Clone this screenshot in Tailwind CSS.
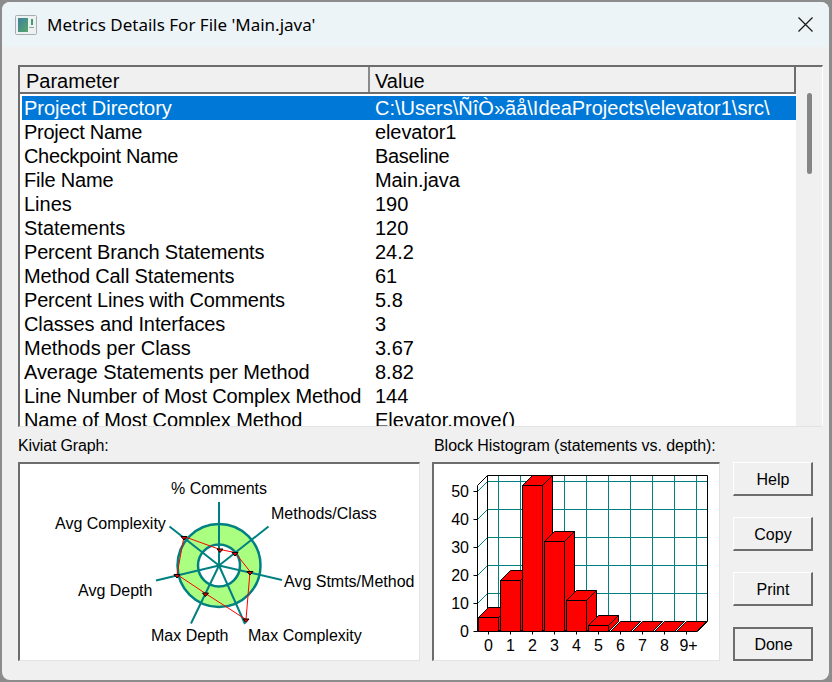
<!DOCTYPE html>
<html lang="en">
<head>
  <meta charset="UTF-8" />
  <title>Metrics Details</title>
  <script src="https://cdn.jsdelivr.net/npm/@tailwindcss/browser@4"></script>
</head>
<body class="h-[682px] w-[832px] overflow-hidden bg-[#8c8c8c] p-[2px] pr-[3px] font-['Liberation_Sans',sans-serif] text-black">

  <div class="flex h-[678px] flex-col overflow-hidden rounded-lg bg-[#f0f0f0]">
    <!-- title bar -->
    <header class="flex h-[45px] shrink-0 items-center bg-[#edf4f8] pl-[13px] pr-[16px]">
      <svg class="h-[20px] w-[22px]" viewBox="0 0 22 20">
        <defs>
          <linearGradient id="ico" x1="0" y1="0" x2="1" y2="1">
            <stop offset="0" stop-color="#3f7f9f" />
            <stop offset="1" stop-color="#55a86a" />
          </linearGradient>
        </defs>
        <rect x="0.5" y="0.5" width="21" height="19" rx="1" fill="#eef1f1" stroke="#a5aeb0" />
        <rect x="3" y="3" width="10" height="14" fill="url(#ico)" />
        <rect x="14" y="12" width="5" height="1" fill="#8fa89a" />
        <rect x="16" y="4" width="2" height="6" fill="#3f9f6a" />
      </svg>
      <span class="ml-[10px] font-['Noto_Sans',sans-serif] text-[17px] leading-none">Metrics Details For File 'Main.java'</span>
      <svg class="ml-auto h-[15px] w-[15px]" viewBox="0 0 15 15" fill="none" stroke="#1a1a1a" stroke-width="1.3">
        <path d="M0.5 0.5 14.5 14.5M14.5 0.5 0.5 14.500" />
      </svg>
    </header>

    <!-- parameter list -->
    <section class="mx-[16px] mt-[18px] flex h-[362px] w-[805px] shrink-0 border-t-2 border-l-2 border-t-[#6d6d6d] border-l-[#6d6d6d] border-r-1 border-b-1 border-r-white border-b-[#e3e3e3] bg-white">
      <div class="h-full w-[776px] overflow-hidden">
        <div class="flex h-[27px] border-b-2 border-b-[#6d6d6d] bg-[#f0f0f0] text-[20px] leading-[28px]">
          <div class="w-[350px] border-r-2 border-r-[#8a8a8a] pl-[6px]">Parameter</div>
          <div class="flex-1 border-r-2 border-r-[#6d6d6d] pl-[5px]">Value</div>
        </div>
        <ul class="pt-[2px] pl-[2px] text-[20px] leading-[24px]">
          <li class="flex h-[24px] bg-[#0078d7] text-white"><span class="w-[353px] pl-[2px]">Project Directory</span><span>C:\Users\ÑîÒ»ãå\IdeaProjects\elevator1\src\</span></li>
          <li class="flex h-[24px]"><span class="w-[353px] pl-[2px] tracking-[-0.25px]">Project Name</span><span class="tracking-[-0.1px]">elevator1</span></li>
          <li class="flex h-[24px]"><span class="w-[353px] pl-[2px] tracking-[-0.33px]">Checkpoint Name</span><span class="tracking-[-0.3px]">Baseline</span></li>
          <li class="flex h-[24px]"><span class="w-[353px] pl-[2px] tracking-[-0.2px]">File Name</span><span class="tracking-[-0.1px]">Main.java</span></li>
          <li class="flex h-[24px]"><span class="w-[353px] pl-[2px]">Lines</span><span>190</span></li>
          <li class="flex h-[24px]"><span class="w-[353px] pl-[2px]">Statements</span><span>120</span></li>
          <li class="flex h-[24px]"><span class="w-[353px] pl-[2px] tracking-[-0.17px]">Percent Branch Statements</span><span>24.2</span></li>
          <li class="flex h-[24px]"><span class="w-[353px] pl-[2px] tracking-[-0.14px]">Method Call Statements</span><span>61</span></li>
          <li class="flex h-[24px]"><span class="w-[353px] pl-[2px] tracking-[-0.18px]">Percent Lines with Comments</span><span>5.8</span></li>
          <li class="flex h-[24px]"><span class="w-[353px] pl-[2px] tracking-[-0.1px]">Classes and Interfaces</span><span>3</span></li>
          <li class="flex h-[24px]"><span class="w-[353px] pl-[2px]">Methods per Class</span><span>3.67</span></li>
          <li class="flex h-[24px]"><span class="w-[353px] pl-[2px] tracking-[-0.07px]">Average Statements per Method</span><span>8.82</span></li>
          <li class="flex h-[24px]"><span class="w-[353px] pl-[2px] tracking-[-0.15px]">Line Number of Most Complex Method</span><span>144</span></li>
          <li class="flex h-[24px]"><span class="w-[353px] pl-[2px] tracking-[-0.11px]">Name of Most Complex Method</span><span>Elevator.move()</span></li>
        </ul>
      </div>
      <!-- scrollbar -->
      <div class="flex-1 bg-[#f0f0f0] pt-[26px] pl-[11px]">
        <div class="h-[81px] w-[5px] rounded-full bg-[#858585]"></div>
      </div>
    </section>

    <!-- graphs + buttons -->
    <div class="mx-[16px] mt-[8px] flex">
      <div class="w-[402px]">
        <div class="h-[27px] text-[16px] leading-[21px] tracking-[-0.15px]">Kiviat Graph:</div>
        <div class="h-[199px] border-t-2 border-l-2 border-t-[#6d6d6d] border-l-[#6d6d6d] border-r-1 border-b-1 border-r-[#e3e3e3] border-b-[#e3e3e3] bg-white">
          <svg class="block h-[196px] w-[399px]" viewBox="20 464 399 196">
            <circle cx="219" cy="565.5" r="31.5" fill="none" stroke="#aaff80" stroke-width="20" />
            <circle cx="219" cy="565.5" r="41.5" fill="none" stroke="#008080" stroke-width="2.500" />
            <circle cx="219" cy="565.5" r="21" fill="none" stroke="#008080" stroke-width="2.500" />
            <path d="M219 565.5 219 502M219 565.5 268.500 526.500M219 565.500 282 580M219 565.500 245 624M219 565.500 191 623.500M219 565.500 156 580.500M219 565.500 169.500 526.500" stroke="#008080" stroke-width="2" fill="none" />
            <polygon points="220,549.500 235,552.500 250,571.500 246,619.500 205.500,593.500 177,574.500 184,536.500" fill="none" stroke="#ff0000" stroke-width="1" />
            <g fill="#ff0000" stroke="#000000" stroke-width="1">
              <path d="M217 549H223L220 552.500Z" />
              <path d="M232 552.500H238L235 556Z" />
              <path d="M247 571.500H253L250 575Z" />
              <path d="M243 619H249L246 622.500Z" />
              <path d="M202.500 593H208.500L205.500 596.500Z" />
              <path d="M174 574.500H180L177 578Z" />
              <path d="M181 536.500H187L184 540Z" />
            </g>
            <g class="text-[16px]" fill="#000000">
              <text x="171" y="494">% Comments</text>
              <text x="271" y="519">Methods/Class</text>
              <text x="55" y="529">Avg Complexity</text>
              <text x="284" y="587">Avg Stmts/Method</text>
              <text x="78" y="596">Avg Depth</text>
              <text x="151" y="641">Max Depth</text>
              <text x="248" y="641">Max Complexity</text>
            </g>
          </svg>
        </div>
      </div>

      <div class="ml-[12px] w-[288px]">
        <div class="h-[27px] pl-[2px] text-[16px] leading-[21px] tracking-[-0.05px] whitespace-nowrap">Block Histogram (statements vs. depth):</div>
        <div class="h-[199px] border-t-2 border-l-2 border-t-[#6d6d6d] border-l-[#6d6d6d] border-r-1 border-b-1 border-r-[#e3e3e3] border-b-[#e3e3e3] bg-white">
          <svg id="hist" class="block h-[196px] w-[285px]" viewBox="434 464 285 196"></svg>
        </div>
      </div>

      <div class="mt-[27px] ml-[13px] flex w-[80px] flex-col gap-[21px] text-[16px]">
        <button class="h-[34px] border-t-1 border-l-1 border-t-white border-l-white border-r-2 border-b-2 border-r-[#6d6d6d] border-b-[#6d6d6d] bg-[#f0f0f0] pt-[2px] pl-[1px]">Help</button>
        <button class="h-[34px] border-t-1 border-l-1 border-t-white border-l-white border-r-2 border-b-2 border-r-[#6d6d6d] border-b-[#6d6d6d] bg-[#f0f0f0] pt-[2px] pl-[1px]">Copy</button>
        <button class="h-[34px] border-t-1 border-l-1 border-t-white border-l-white border-r-2 border-b-2 border-r-[#6d6d6d] border-b-[#6d6d6d] bg-[#f0f0f0] pt-[2px] pl-[1px]">Print</button>
        <button class="h-[34px] border-2 border-[#6d6d6d] bg-[#f0f0f0] pt-[2px] pl-[1px]">Done</button>
      </div>
    </div>
  </div>

  <script>
    // histogram is drawn from its values, page coordinates
    const svgNs = "http://www.w3.org/2000/svg";
    const hist = document.getElementById("hist");
    const add = (tag, attrs, text) => {
      const el = document.createElementNS(svgNs, tag);
      for (const k in attrs) el.setAttribute(k, attrs[k]);
      if (text) el.textContent = text;
      hist.appendChild(el);
    };
    const teal = "#008080";

    // back wall + left wall grid
    [481.5, 509.5, 537.5, 565.5, 593.5].forEach((y) => {
      add("path", { d: `M477.500 ${y + 10}L487.500 ${y}H707.500`, stroke: teal, fill: "none" });
    });
    for (let i = 0; i < 10; i++) {
      const x = 498.5 + 22 * i;
      add("path", { d: `M${x} 475V621.500`, stroke: teal, fill: "none" });
    }

    // frame
    add("path", { d: "M477.500 631.500V485.500L487.500 475.500H707.500V621.500L697.500 631.500H477.500", stroke: "#000", fill: "none" });
    add("path", { d: "M487.500 475.500V621.500", stroke: "#000", fill: "none" });

    // y axis ticks and labels
    [0, 10, 20, 30, 40, 50].forEach((v, i) => {
      const y = 631.5 - 28 * i;
      add("path", { d: `M473.500 ${y}H477.500`, stroke: "#000", fill: "none" });
      add("text", { x: 469, y: y + 5, "text-anchor": "end", "font-size": "16" }, String(v));
    });

    // bars, tallest drawn in order so each front overlaps the one behind
    const tops = [617.5, 580.5, 485.5, 541.5, 600.5, 625.5, 631.5, 631.5, 631.5, 631.5];
    const names = ["0", "1", "2", "3", "4", "5", "6", "7", "8", "9+"];
    tops.forEach((top, i) => {
      const x = 478.5 + 22 * i;
      const style = { fill: "#ff0000", stroke: "#000", "stroke-linejoin": "miter" };
      add("path", { d: `M${x + 20} ${top}L${x + 30} ${top - 10}V621.500L${x + 20} 631.500Z`, ...style });
      add("path", { d: `M${x} ${top}L${x + 10} ${top - 10}H${x + 30}L${x + 20} ${top}Z`, ...style });
      if (top < 631) add("rect", { x, y: top, width: 20, height: 631.5 - top, ...style });
      add("path", { d: `M${x + 10} 631.500V634.500`, stroke: "#000", fill: "none" });
      add("text", { x: i === 9 ? x + 12 : x + 10, y: 651, "text-anchor": "middle", "font-size": "16" }, names[i]);
    });
  </script>
</body>
</html>
